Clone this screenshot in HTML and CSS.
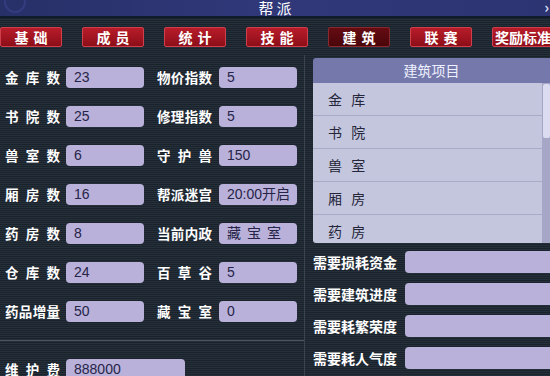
FILE: index.html
```html
<!DOCTYPE html>
<html lang="zh-cn">
<head>
  <meta charset="UTF-8">
  <title>帮派</title>
  <link rel="stylesheet" href="styles.css">
</head>
<body>

<div class="titlebar">
  <span class="swirl"></span>
  <div class="title">帮派</div>
  <span class="close">›</span>
</div>

<div class="tabs">
  <div class="tab">基础</div>
  <div class="tab">成员</div>
  <div class="tab">统计</div>
  <div class="tab">技能</div>
  <div class="tab active">建筑</div>
  <div class="tab">联赛</div>
  <div class="tab wide">奖励标准</div>
</div>

<div class="main">
  <div class="left">
    <div class="grid">
      <div class="field"><span class="label">金库数</span><span class="box">23</span></div>
      <div class="field"><span class="label">物价指数</span><span class="box">5</span></div>
      <div class="field"><span class="label">书院数</span><span class="box">25</span></div>
      <div class="field"><span class="label">修理指数</span><span class="box">5</span></div>
      <div class="field"><span class="label">兽室数</span><span class="box">6</span></div>
      <div class="field"><span class="label">守护兽</span><span class="box">150</span></div>
      <div class="field"><span class="label">厢房数</span><span class="box">16</span></div>
      <div class="field"><span class="label">帮派迷宫</span><span class="box">20:00开启</span></div>
      <div class="field"><span class="label">药房数</span><span class="box">8</span></div>
      <div class="field"><span class="label">当前内政</span><span class="box spaced">藏宝室</span></div>
      <div class="field"><span class="label">仓库数</span><span class="box">24</span></div>
      <div class="field"><span class="label">百草谷</span><span class="box">5</span></div>
      <div class="field"><span class="label">药品增量</span><span class="box">50</span></div>
      <div class="field"><span class="label">藏宝室</span><span class="box">0</span></div>
    </div>
    <div class="divider"></div>
    <div class="field"><span class="label">维护费</span><span class="box long">888000</span></div>
  </div>

  <div class="right">
    <div class="list">
      <div class="list-head">建筑项目</div>
      <div class="list-body">
        <div class="rows">
          <div class="row">金 库</div>
          <div class="row">书 院</div>
          <div class="row">兽 室</div>
          <div class="row">厢 房</div>
          <div class="row">药 房</div>
        </div>
        <div class="scroll"><div class="thumb"></div></div>
      </div>
    </div>
    <div class="needs">
      <div class="need"><span class="need-label">需要损耗资金</span><span class="box wide-box"></span></div>
      <div class="need"><span class="need-label">需要建筑进度</span><span class="box wide-box"></span></div>
      <div class="need"><span class="need-label">需要耗繁荣度</span><span class="box wide-box"></span></div>
      <div class="need"><span class="need-label">需要耗人气度</span><span class="box wide-box"></span></div>
    </div>
  </div>
</div>

</body>
</html>
```

FILE: styles.css
```css
body {
  margin: 0;
  width: 550px;
  height: 376px;
  overflow: hidden;
  font-family: "Noto Sans CJK SC", sans-serif;
  background: repeating-linear-gradient(#1a222c 0 1px, #26303b 1px 2px);
  color: #fff;
}

.titlebar {
  position: relative;
  height: 16px;
  background: linear-gradient(90deg, #283068, #30387a 50%, #2c3472);
  border-bottom: 2px solid #0f1a2a;
  display: flex;
  justify-content: center;
  overflow: hidden;
}
.title {
  font-size: 15px;
  line-height: 15px;
  letter-spacing: 3px;
  text-indent: 3px;
}
.swirl {
  position: absolute;
  left: 4px;
  top: -9px;
  width: 18px;
  height: 18px;
  border-radius: 50%;
  border: 2px solid #343c80;
}
.close {
  position: absolute;
  right: 1px;
  top: -1px;
  font-size: 15px;
  line-height: 15px;
  font-weight: bold;
  color: #d8dcf0;
}

.tabs {
  display: flex;
  gap: 20px;
  padding-top: 9px;
  height: 20px;
}
.tab {
  flex: 0 0 60px;
  height: 18px;
  border: 1px solid #d0404c;
  border-radius: 2px;
  background: linear-gradient(#b81c2a, #8c0e18);
  font-size: 14px;
  font-weight: bold;
  line-height: 18px;
  text-align: center;
  letter-spacing: 5px;
  text-indent: 5px;
}
.tab.active {
  background: linear-gradient(#640c12, #4a060a);
  border-color: #8a2830;
}
.tab.wide {
  letter-spacing: 0;
  text-indent: 0;
  white-space: nowrap;
}

.main {
  display: flex;
  margin-top: 8px;
}
.left {
  width: 305px;
  height: 330px;
  border-right: 1px solid #3a4450;
  padding-top: 12px;
  box-sizing: border-box;
}
.grid {
  display: grid;
  grid-template-columns: 152px 152px;
  row-gap: 18px;
}
.field {
  display: flex;
  align-items: center;
  gap: 6px;
  padding-left: 5px;
}
.grid .field:nth-child(even) {
  gap: 7px;
}
.label {
  flex: 0 0 55px;
  font-size: 13.5px;
  font-weight: bold;
  white-space: nowrap;
  text-align: justify;
  text-align-last: justify;
  line-height: 21px;
}
.box {
  width: 78px;
  height: 21px;
  box-sizing: border-box;
  padding-left: 8px;
  border-radius: 4px;
  background: #b9b1d9;
  color: #262448;
  font-family: "Liberation Sans", "Noto Sans CJK SC", sans-serif;
  font-size: 14px;
  line-height: 21px;
  white-space: nowrap;
}
.box.spaced {
  letter-spacing: 6px;
}
.box.long {
  width: 119px;
}
.divider {
  height: 1px;
  background: #4a5560;
  margin: 18px 0;
}

.right {
  flex: 1;
  padding-left: 8px;
}
.list {
  margin-top: 3px;
  border-radius: 3px 0 0 3px;
  overflow: hidden;
}
.list-head {
  height: 25px;
  background: #7478aa;
  font-size: 14px;
  line-height: 25px;
  text-align: center;
  color: #eef0ff;
}
.list-body {
  display: flex;
  height: 160px;
  overflow: hidden;
  background: #c4c6de;
}
.rows {
  flex: 1;
}
.row {
  height: 32px;
  border-bottom: 1px solid #a8aac8;
  padding-left: 15px;
  font-size: 14px;
  line-height: 32px;
  color: #26263a;
  letter-spacing: 3px;
}
.scroll {
  width: 8px;
  background: #a6a6c6;
  padding-top: 1px;
}
.thumb {
  height: 54px;
  margin-left: 1px;
  background: #dcdcf0;
  border-radius: 2px;
}

.needs {
  display: flex;
  flex-direction: column;
  gap: 10px;
  margin-top: 8px;
}
.need {
  display: flex;
  align-items: center;
  gap: 8px;
}
.need-label {
  font-size: 14px;
  font-weight: bold;
  width: 84px;
  white-space: nowrap;
  line-height: 22px;
}
.wide-box {
  flex: 1;
  height: 22px;
  border-radius: 4px 0 0 4px;
}
```
